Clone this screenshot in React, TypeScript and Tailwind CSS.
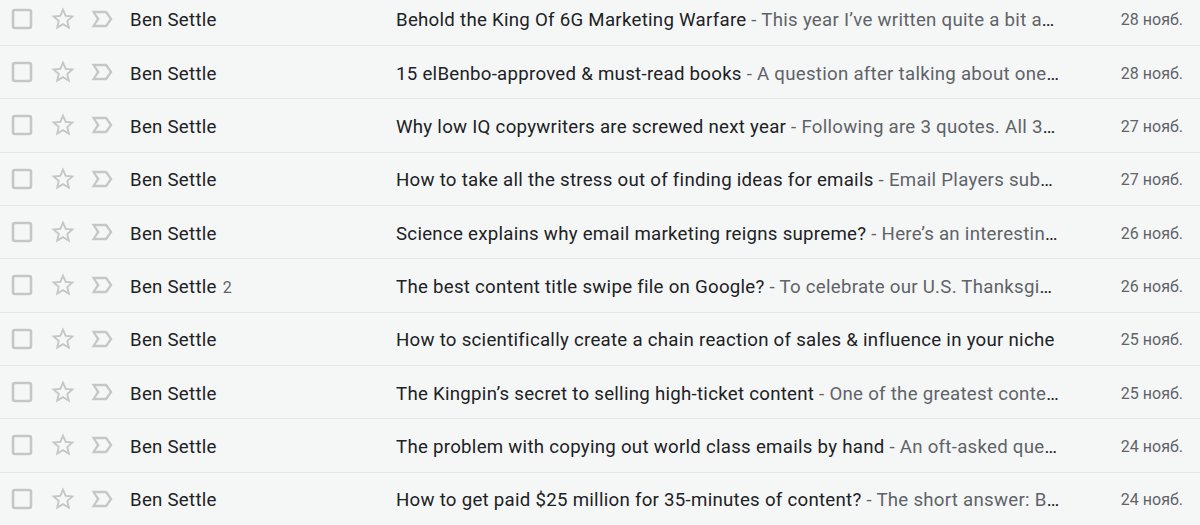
type Mail = {
  sender: string;
  count?: number;
  subject: string;
  snippet?: string;
  date: string;
};

const mails: Mail[] = [
  { sender: "Ben Settle", subject: "Behold the King Of 6G Marketing Warfare", snippet: "This year I’ve written quite a bit about the power of being a kingpin and owning your own world", date: "28 нояб." },
  { sender: "Ben Settle", subject: "15 elBenbo-approved & must-read books", snippet: "A question after talking about one of my favorite books last week", date: "28 нояб." },
  { sender: "Ben Settle", subject: "Why low IQ copywriters are screwed next year", snippet: "Following are 3 quotes. All 3 are from the same person", date: "27 нояб." },
  { sender: "Ben Settle", subject: "How to take all the stress out of finding ideas for emails", snippet: "Email Players subscribers know the secret", date: "27 нояб." },
  { sender: "Ben Settle", subject: "Science explains why email marketing reigns supreme?", snippet: "Here’s an interesting article I read this morning", date: "26 нояб." },
  { sender: "Ben Settle", count: 2, subject: "The best content title swipe file on Google?", snippet: "To celebrate our U.S. Thanksgiving holiday this week", date: "26 нояб." },
  { sender: "Ben Settle", subject: "How to scientifically create a chain reaction of sales & influence in your niche", date: "25 нояб." },
  { sender: "Ben Settle", subject: "The Kingpin’s secret to selling high-ticket content", snippet: "One of the greatest content sellers of all time", date: "25 нояб." },
  { sender: "Ben Settle", subject: "The problem with copying out world class emails by hand", snippet: "An oft-asked question I get from new subscribers", date: "24 нояб." },
  { sender: "Ben Settle", subject: "How to get paid $25 million for 35-minutes of content?", snippet: "The short answer: Be the kingpin", date: "24 нояб." },
];

function CheckboxIcon() {
  return (
    <svg width="22" height="22" viewBox="0 0 22 22" className="shrink-0">
      <rect x="2" y="2" width="18" height="18" rx="2" fill="none" stroke="#c5c7c7" strokeWidth="2.6" />
    </svg>
  );
}

function StarIcon() {
  return (
    <svg width="28" height="28" viewBox="0 0 24 24" className="shrink-0">
      <path
        fill="#c5c7c7"
        d="M22 9.24l-7.19-.62L12 2 9.19 8.63 2 9.24l5.46 4.73L5.82 21 12 17.27 18.18 21l-1.63-7.03L22 9.24zM12 15.4l-3.76 2.27 1-4.28-3.32-2.88 4.38-.38L12 6.1l1.71 4.04 4.38.38-3.32 2.88 1 4.28L12 15.4z"
      />
    </svg>
  );
}

function ImportantIcon() {
  return (
    <svg width="28" height="28" viewBox="0 0 24 24" className="shrink-0">
      <path
        fill="#c5c7c7"
        d="M15 19H3l4.5-7L3 5h12c.65 0 1.26.31 1.63.84L21 12l-4.37 6.16c-.37.52-.98.84-1.63.84zm-8.5-2H15l3.5-5L15 7H6.5l3.5 5-3.5 5z"
      />
    </svg>
  );
}

function MailRow({ mail }: { mail: Mail }) {
  return (
    <div className="flex h-[53.33px] items-center border-b border-[#e4e6e7] bg-[#f5f7f7]">
      {/* controls */}
      <div className="flex w-[130px] shrink-0 items-center">
        <div className="ml-[11px] flex w-[22px] justify-center">
          <CheckboxIcon />
        </div>
        <div className="ml-[16px] flex w-[28px] justify-center">
          <StarIcon />
        </div>
        <div className="ml-[11px] flex w-[28px] justify-center">
          <ImportantIcon />
        </div>
      </div>

      {/* sender */}
      <div className="w-[266px] shrink-0 truncate pt-[3px] text-[18.67px] tracking-[0.27px] text-[#202124]">
        {mail.sender}
        {mail.count && <span className="ml-[6px] text-[16px] text-[#5f6368]">{mail.count}</span>}
      </div>

      {/* subject + snippet */}
      <div className="min-w-0 flex-1 truncate pt-[3px] text-[18.67px] tracking-[0.27px] text-[#202124]">
        {mail.subject}
        {mail.snippet && <span className="text-[#5f6368]"> - {mail.snippet}</span>}
      </div>

      {/* date */}
      <div className="w-[140px] shrink-0 pt-[3px] pr-[17px] text-right text-[16px] text-[#5f6368]">
        {mail.date}
      </div>
    </div>
  );
}

export default function App() {
  return (
    <div
      className="h-[525px] w-[1200px] overflow-hidden bg-[#f5f7f7]"
      style={{ fontFamily: "Roboto, 'Liberation Sans', sans-serif" }}
    >
      <div className="-mt-[7.33px]">
        {mails.map((m, i) => (
          <MailRow key={i} mail={m} />
        ))}
      </div>
    </div>
  );
}
